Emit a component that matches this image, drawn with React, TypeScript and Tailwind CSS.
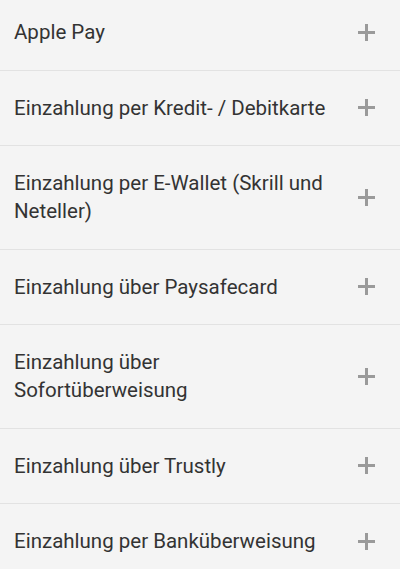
const items: string[] = [
  "Apple Pay",
  "Einzahlung per Kredit- / Debitkarte",
  "Einzahlung per E-Wallet (Skrill und Neteller)",
  "Einzahlung über Paysafecard",
  "Einzahlung über Sofortüberweisung",
  "Einzahlung über Trustly",
  "Einzahlung per Banküberweisung",
];

function PlusIcon() {
  return (
    <svg width="17" height="17" viewBox="0 0 17 17" className="shrink-0">
      <rect x="7" y="0" width="3" height="17" fill="#9a9a9a" />
      <rect x="0" y="7" width="17" height="3" fill="#9a9a9a" />
    </svg>
  );
}

export default function App() {
  return (
    <div className="w-[400px] h-[569px] overflow-hidden bg-[#f4f4f4]">
      <div className="-mt-[5px]" style={{ fontFamily: "Roboto, sans-serif" }}>
        {items.map((label, i) => (
          <div
            key={i}
            className={
              "flex items-center justify-between pl-[14px] pr-[25px] py-[23.25px] " +
              (i < items.length - 1 ? "border-b border-[#e2e2e2]" : "")
            }
          >
            <span
              className={
                "text-[20.5px] leading-[28px] text-[#333] " +
                (i === 2 ? "max-w-[330px]" : i === 4 ? "max-w-[220px]" : "")
              }
            >
              {label}
            </span>
            <PlusIcon />
          </div>
        ))}
      </div>
    </div>
  );
}
